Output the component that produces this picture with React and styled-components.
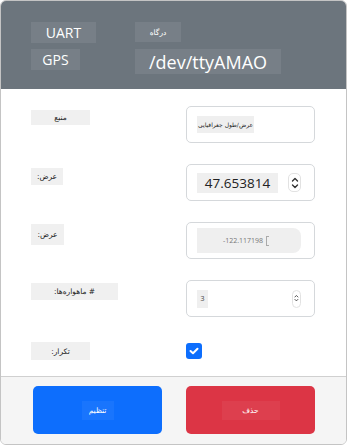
import React from "react";
import styled, { createGlobalStyle } from "styled-components";

const Global = createGlobalStyle`
  html, body { margin: 0; padding: 0; background: #fff; }
  body { font-family: "Open Sans", "DejaVu Sans", sans-serif; }
`;

const Card = styled.div`
  box-sizing: border-box;
  width: 347px;
  height: 445px;
  border: 1px solid #c4c4c4;
  border-radius: 6px;
  overflow: hidden;
  display: flex;
  flex-direction: column;
  background: #fff;
`;

const Header = styled.div`
  background: #6c757d;
  height: 88px;
  box-sizing: border-box;
  padding: 21px 0 0 30px;
  display: grid;
  grid-template-columns: 104px auto;
  grid-template-rows: 21px 25px;
  row-gap: 6px;
  align-content: start;
  justify-items: start;
`;

const Chip = styled.div`
  background: rgba(255, 255, 255, 0.08);
  color: #fff;
  font-family: ${(p) => (p.$ar ? '"DejaVu Sans", sans-serif' : '"Open Sans", sans-serif')};
  font-size: ${(p) => p.$size}px;
  width: ${(p) => p.$w}px;
  height: ${(p) => p.$h}px;
  display: flex;
  align-items: center;
  justify-content: center;
  direction: ${(p) => (p.$ar ? "rtl" : "ltr")};
`;

const Body = styled.div`
  flex: 1;
  padding: 17px 0 0 30px;
  display: grid;
  grid-template-columns: 155px 129px;
  grid-auto-rows: 37px;
  row-gap: 21px;
`;

const Label = styled.div`
  background: #f0f0f0;
  color: #222;
  font-family: "DejaVu Sans", sans-serif;
  font-size: 7.5px;
  direction: rtl;
  width: ${(p) => p.$w}px;
  height: ${(p) => p.$h || 16}px;
  margin-top: ${(p) => p.$top || 4}px;
  display: flex;
  align-items: center;
  justify-content: center;
`;

const Field = styled.div`
  box-sizing: border-box;
  border: 1px solid #d5d8db;
  border-radius: 5px;
  height: 37px;
  display: flex;
  align-items: center;
  padding: 0 10px;
  justify-content: space-between;
`;

const FieldText = styled.div`
  background: #efefef;
  color: ${(p) => p.$color || "#222"};
  font-family: ${(p) => (p.$ar ? '"DejaVu Sans", sans-serif' : '"Open Sans", sans-serif')};
  font-size: ${(p) => p.$size}px;
  width: ${(p) => p.$w}px;
  height: ${(p) => p.$h}px;
  display: flex;
  align-items: center;
  justify-content: ${(p) => p.$justify || "center"};
  direction: ${(p) => (p.$ar ? "rtl" : "ltr")};
  border-radius: ${(p) => p.$radius || "0"};
  box-sizing: border-box;
  padding: 0 ${(p) => p.$pad || 0}px;
`;

const Caret = styled.span`
  display: inline-block;
  width: 2px;
  height: 8px;
  margin-left: 3px;
  border: 1px solid #aaa;
  border-right: none;
`;

const Spinner = styled.div`
  width: ${(p) => p.$w}px;
  height: ${(p) => p.$h}px;
  border-radius: 5px;
  border: 1px solid #e2e2e2;
  box-sizing: border-box;
  display: flex;
  flex-direction: column;
  align-items: center;
  justify-content: center;
  margin-right: 3px;
`;

const CheckRow = styled.div`
  grid-column: 2;
  display: flex;
  align-items: center;
  height: 16px;
  margin-top: 5px;
`;

const Check = styled.div`
  width: 16px;
  height: 16px;
  background: #0d6efd;
  border-radius: 3px;
  display: flex;
  align-items: center;
  justify-content: center;
`;

const Footer = styled.div`
  height: 68px;
  background: #f5f5f5;
  border-top: 1px solid #d0d0d0;
  box-sizing: border-box;
  padding: 9px 0 0 32px;
  display: flex;
  gap: 24px;
  align-items: flex-start;
`;

const Btn = styled.div`
  width: 129px;
  height: 48px;
  border-radius: 5px;
  background: ${(p) => p.$bg};
  display: flex;
  align-items: center;
  justify-content: center;
`;

const BtnText = styled.div`
  background: rgba(255, 255, 255, 0.05);
  color: #fff;
  font-family: "DejaVu Sans", sans-serif;
  font-size: 7.5px;
  direction: rtl;
  width: ${(p) => p.$w}px;
  height: 19px;
  display: flex;
  align-items: center;
  justify-content: center;
`;

const Chevrons = ({ size = 1 }) => (
  <svg width={8 * size} height={14 * size} viewBox="0 0 8 14" fill="none" stroke="#333" strokeWidth="1.4" strokeLinecap="round" strokeLinejoin="round">
    <path d="M1.5 5 L4 2.5 L6.5 5" />
    <path d="M1.5 9 L4 11.5 L6.5 9" />
  </svg>
);

export default function App() {
  return (
    <>
      <Global />
      <Card>
        <Header>
          <Chip $w={65} $h={21} $size={14}>UART</Chip>
          <Chip $ar $w={46} $h={20} $size={7.5}>درگاه</Chip>
          <Chip $w={49} $h={21} $size={14}>GPS</Chip>
          <Chip $w={146} $h={25} $size={18}>/dev/ttyAMAO</Chip>
        </Header>
        <Body>
          <Label $w={59} $h={15} $top={4}>منبع</Label>
          <Field>
            <FieldText $ar $w={57} $h={17} $size={6}>عرض/طول جغرافیایی</FieldText>
          </Field>

          <Label $w={32} $h={17} $top={4}>عرض:</Label>
          <Field>
            <FieldText $w={81} $h={20} $size={13.5}>47.653814</FieldText>
            <Spinner $w={13} $h={19}>
              <Chevrons />
            </Spinner>
          </Field>

          <Label $w={33} $h={21} $top={2}>عرض:</Label>
          <Field>
            <FieldText $w={104} $h={25} $size={7} $color="#777" $radius="0 8px 8px 0" $justify="flex-start" $pad={26}>
              -122.117198<Caret />
            </FieldText>
          </Field>

          <Label $w={87} $h={17} $top={3}># ماهواره‌ها:</Label>
          <Field>
            <FieldText $w={11} $h={18} $size={7} $color="#444">3</FieldText>
            <Spinner $w={9} $h={18}>
              <Chevrons size={0.6} />
            </Spinner>
          </Field>

          <Label $w={59} $h={18} $top={4}>تکرار:</Label>
          <CheckRow>
            <Check>
              <svg width="10" height="8" viewBox="0 0 10 8" fill="none" stroke="#fff" strokeWidth="2" strokeLinecap="round" strokeLinejoin="round">
                <path d="M1.5 4 L4 6.3 L8.5 1.7" />
              </svg>
            </Check>
          </CheckRow>
        </Body>
        <Footer>
          <Btn $bg="#0d6efd">
            <BtnText $w={32}>تنظیم</BtnText>
          </Btn>
          <Btn $bg="#dc3545">
            <BtnText $w={58}>حذف</BtnText>
          </Btn>
        </Footer>
      </Card>
    </>
  );
}
